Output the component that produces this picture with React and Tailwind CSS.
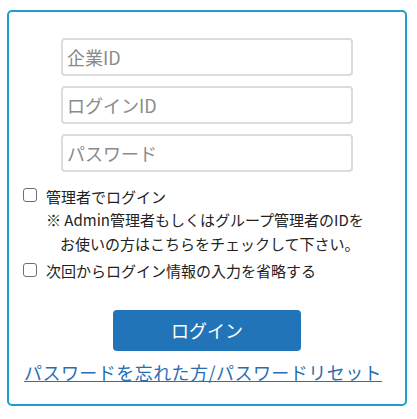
export default function App() {
  const font = { fontFamily: '"Noto Sans CJK JP", "Noto Sans", sans-serif' };
  return (
    <div className="w-[417px] h-[419px] bg-white pt-[10px] pl-[7px]" style={font}>
      <div className="w-[400px] h-[396px] border-2 border-[#1e9fcb] rounded-[5px] flex flex-col">
        <div className="flex flex-col gap-[10px] pl-[52px] pt-[26px]">
          {["企業ID", "ログインID", "パスワード"].map((p) => (
            <input
              key={p}
              placeholder={p}
              type={p === "パスワード" ? "password" : "text"}
              className="w-[292px] h-[38px] border-2 border-[#dcdcdc] rounded-[4px] px-[4px] text-[18px] text-[#333] placeholder:text-[#8a8a8a] outline-none"
              style={font}
            />
          ))}
        </div>
        <div className="pl-[14px] mt-[14px] text-[15px] text-[#222]">
          <label className="flex items-start leading-[22px]">
            <span className="mt-[2px] w-[14px] h-[14px] border border-[#6f6f6f] rounded-[3px] shrink-0" />
            <span className="ml-[9px]">管理者でログイン</span>
          </label>
          <div className="ml-[23px] leading-[24px]">
            <div>※ Admin管理者もしくはグループ管理者のIDを</div>
            <div className="pl-[14px]">お使いの方はこちらをチェックして下さい。</div>
          </div>
          <label className="flex items-start leading-[22px] mt-[4px]">
            <span className="mt-[3px] w-[14px] h-[14px] border border-[#6f6f6f] rounded-[3px] shrink-0" />
            <span className="ml-[9px]">次回からログイン情報の入力を省略する</span>
          </label>
        </div>
        <div className="flex justify-center mt-[28px]">
          <button className="w-[188px] h-[41px] bg-[#2274b8] rounded-[4px] text-white text-[18px]" style={font}>
            ログイン
          </button>
        </div>
        <div className="pl-[15px] mt-[8px] leading-[26px]">
          <a href="#" className="text-[18px] tracking-[0.45px] text-[#2a6eb2] underline">
            パスワードを忘れた方/パスワードリセット
          </a>
        </div>
      </div>
    </div>
  );
}
